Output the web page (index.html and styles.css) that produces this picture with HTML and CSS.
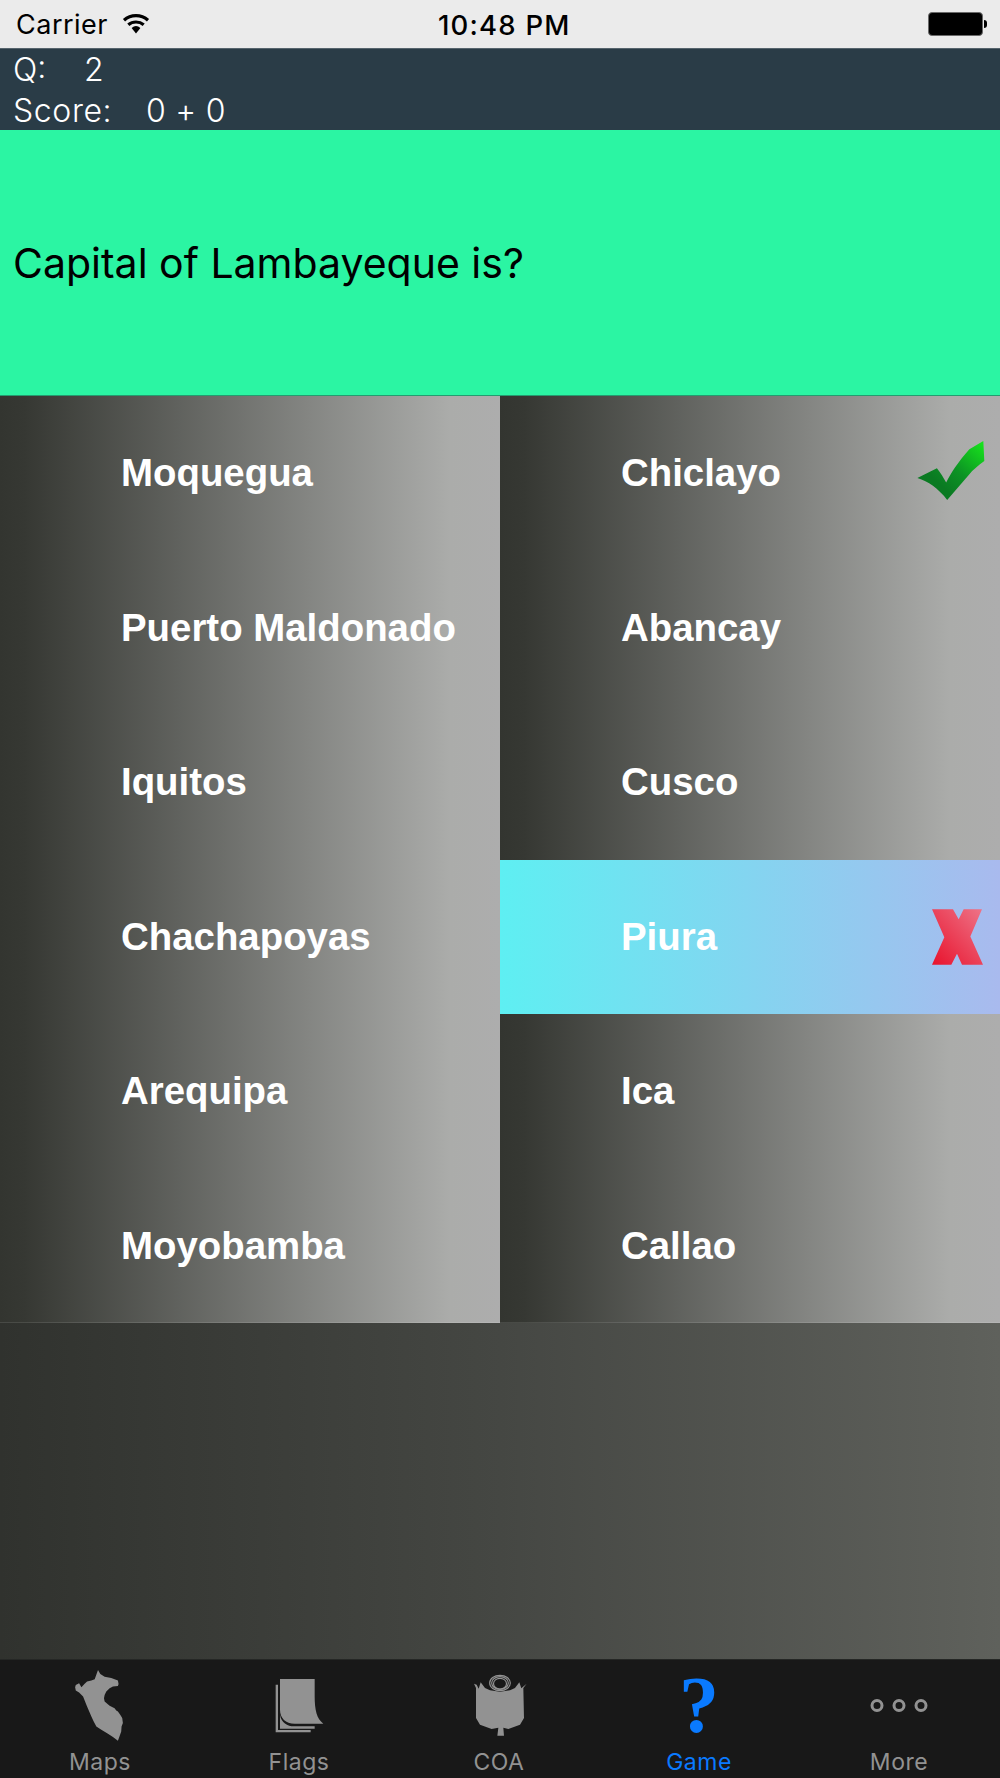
FILE: index.html
```html
<!DOCTYPE html>
<html lang="en">
<head>
<meta charset="utf-8">
<title>Peru Quiz</title>
<link rel="stylesheet" href="styles.css">
</head>
<body>
<div class="app">
  <header class="status">
    <div class="status-left">
      <span class="carrier">Carrier</span>
      <svg class="wifi" width="30" height="22" viewBox="0 0 30 22"><path d="M15 21.5 10.6 15.9a7 7 0 0 1 8.8 0Z" fill="#000"/><path d="M3 8.2a18 18 0 0 1 24 0M7.300 12.800a12 12 0 0 1 15.400 0" fill="none" stroke="#000" stroke-width="3.200"/></svg>
    </div>
    <span class="clock">10:48 PM</span>
    <div class="battery"><span class="battery-body"></span><span class="battery-tip"></span></div>
  </header>
  <section class="scorebar">
    <div class="score-row"><span class="score-q">Q:</span><span>2</span></div>
    <div class="score-row"><span class="score-s">Score:</span><span class="score-v">0 + 0</span></div>
  </section>
  <section class="question">Capital of Lambayeque is?</section>
  <main class="answers">
    <div class="col">
      <div class="answer"><span>Moquegua</span></div>
      <div class="answer"><span>Puerto Maldonado</span></div>
      <div class="answer"><span>Iquitos</span></div>
      <div class="answer"><span>Chachapoyas</span></div>
      <div class="answer"><span>Arequipa</span></div>
      <div class="answer"><span>Moyobamba</span></div>
    </div>
    <div class="col">
      <div class="answer"><span>Chiclayo</span>
        <svg class="mark" width="68" height="59" viewBox="113 65 203 178"><defs><linearGradient id="chk" x1="0" y1="1" x2="1" y2="0"><stop offset=".3" stop-color="#0a7a22"/><stop offset=".55" stop-color="#0c9324"/><stop offset="1" stop-color="#18e81c"/></linearGradient></defs><path d="M113 177 172 147 C183 160 192 176 200 190 C215 160 235 130 270 90 L312 65 315 125 C295 140 280 152 270 165 L203 243 C190 225 175 212 160 200 C145 190 130 182 113 177Z" fill="url(#chk)"/></svg>
      </div>
      <div class="answer"><span>Abancay</span></div>
      <div class="answer"><span>Cusco</span></div>
      <div class="answer answer-wrong"><span>Piura</span>
        <svg class="mark-x" width="51" height="56" viewBox="155 88 153 167"><defs><linearGradient id="crs" x1="0" y1="1" x2="1" y2="0"><stop offset="0" stop-color="#e8122c"/><stop offset="1" stop-color="#ee7488"/></linearGradient></defs><path d="M155 88H218L235 118 250 88H305L270 170 308 255H245L230 222 213 255H155L192 172Z" fill="url(#crs)"/></svg>
      </div>
      <div class="answer"><span>Ica</span></div>
      <div class="answer"><span>Callao</span></div>
    </div>
  </main>
  <div class="filler"></div>
  <nav class="tabs">
    <div class="tab">
      <svg class="tab-icon icon-map" width="49" height="71" viewBox="75 30 146 214"><path d="M145 30 152 42 165 50 185 54 205 62 207 72 205 78 190 80 180 85 170 95 165 105 163 115 165 125 180 138 195 145 200 152 205 155 212 165 218 175 220 190 216 200 215 215 210 230 205 243 190 232 175 222 155 210 140 200 132 185 125 170 112 140 100 110 88 98 78 92 76 82 78 75 88 70 95 82 104 72 112 65 125 62 135 58Z" fill="#929292"/></svg>
      <span>Maps</span>
    </div>
    <div class="tab">
      <svg class="tab-icon icon-flag" width="50" height="55" viewBox="70 55 150 165"><path d="M75 75H82V211H180V218H75Z" fill="#929292"/><path d="M88 165C92 190 110 199 130 200H192V207H88Z" fill="#929292"/><path d="M88 58H192V110C192 150 198 178 218 192H132C105 192 88 175 88 150Z" fill="#929292"/></svg>
      <span>Flags</span>
    </div>
    <div class="tab">
      <svg class="tab-icon icon-coa" width="57" height="64" viewBox="65 40 170 192"><g fill="none" stroke="#929292" stroke-width="3.500"><ellipse cx="150" cy="70" rx="31" ry="23"/><ellipse cx="150" cy="70" rx="25" ry="19"/><ellipse cx="150" cy="72" rx="19.500" ry="16"/></g><path d="M72 72 80 75 86 87 92 68 105 85 120 92 150 96 180 92 195 85 208 68 214 86 230 72 220 85 222 175 210 195 175 208 160 204 162 228 142 228 145 204 125 208 90 195 78 175 78 85Z" fill="#929292"/></svg>
      <span>COA</span>
    </div>
    <div class="tab tab-active">
      <span class="tab-q">?</span>
      <span>Game</span>
    </div>
    <div class="tab">
      <div class="tab-more"><i></i><i></i><i></i></div>
      <span>More</span>
    </div>
  </nav>
</div>
</body>
</html>
```
FILE: styles.css
```css
* { box-sizing: border-box; }
html, body { margin: 0; padding: 0; }
body { font-family: "Inter", "Liberation Sans", sans-serif; background: #000; }
.app { width: 1000px; height: 1778px; display: flex; flex-direction: column; overflow: hidden; }

.status { height: 48px; background: #ebebeb; display: flex; align-items: center; justify-content: space-between; padding: 0 13px 0 16px; position: relative; color: #000; flex: none; }
.status-left { display: flex; align-items: center; gap: 13px; }
.carrier { font-size: 27px; font-weight: 400; letter-spacing: .5px; }
.wifi { display: block; margin-top: -2px; }
.clock { font-size: 27.5px; font-weight: 500; position: absolute; left: 438px; top: 8px; letter-spacing: 1.2px; }
.battery { display: flex; align-items: center; }
.battery-body { width: 55px; height: 24px; background: #000; border: 1.500px solid #6a6a6a; border-radius: 4px; display: block; }
.battery-tip { width: 3px; height: 8px; background: #000; border-radius: 0 3px 3px 0; margin-left: 1px; display: block; }

.scorebar { height: 82px; background: #2a3c47; border-top: 1px solid #56646d; color: #fff; padding: 0 0 0 13px; font-size: 32px; flex: none; font-family: "Inter", "Liberation Sans", sans-serif; font-weight: 300; }
.score-row { display: flex; height: 41px; line-height: 41px; }
.score-q { width: 71px; }
.score-s { width: 133px; letter-spacing: .6px; }
.score-v { letter-spacing: .3px; }

.question { height: 266px; background: #2bf5a3; color: #000; display: flex; align-items: center; padding-left: 13px; font-size: 41px; font-family: "Inter", "Liberation Sans", sans-serif; font-weight: 400; flex: none; border-bottom: 1px solid #249c70; }

.answers { display: grid; grid-template-columns: 500px 500px; height: 927px; flex: none; }
.col { display: grid; grid-template-rows: repeat(6, 1fr); background: linear-gradient(90deg, #333530 0%, #363833 5%, #abacaa 90%, #adadad 100%); box-shadow: inset 0 -1px rgba(255,255,255,.1); }
.answer { display: flex; align-items: center; padding-left: 121px; color: #fff; font: bold 38.4px "Liberation Sans", Arial, sans-serif; position: relative; }
.answer-wrong { background: linear-gradient(90deg, #5eeff2 0%, #a9baee 100%); }
.mark { position: absolute; right: 15px; top: 45px; }
.mark-x { position: absolute; right: 17px; top: 49px; }

.filler { flex: 1; background: linear-gradient(90deg, #30322e 0%, #454743 50%, #5f615c 100%); }

.tabs { height: 119px; background: #181818; border-top: 1px solid #252725; display: grid; grid-template-columns: 200px 198px 202px 198px 202px; flex: none; }
.tab { display: flex; flex-direction: column; align-items: center; justify-content: flex-end; color: #929292; font-size: 23px; padding-bottom: 2px; position: relative; line-height: 28px; letter-spacing: .5px; }
.tab-icon { position: absolute; left: 50%; transform: translateX(-50%); }
.icon-map { top: 10px; margin-left: -1px; }
.icon-flag { top: 18px; }
.icon-coa { top: 13px; margin-left: 1px; }
.tab-active { color: #0a7aff; }
.tab-q { position: absolute; top: 5px; left: 50%; transform: translateX(-50%); font: bold 80px/1 "Liberation Serif", serif; letter-spacing: 0; }
.tab-more { position: absolute; top: 39px; left: 50%; transform: translateX(-50%); display: flex; gap: 9px; }
.tab-more i { width: 13px; height: 13px; border: 3px solid #929292; border-radius: 50%; display: block; }
```
